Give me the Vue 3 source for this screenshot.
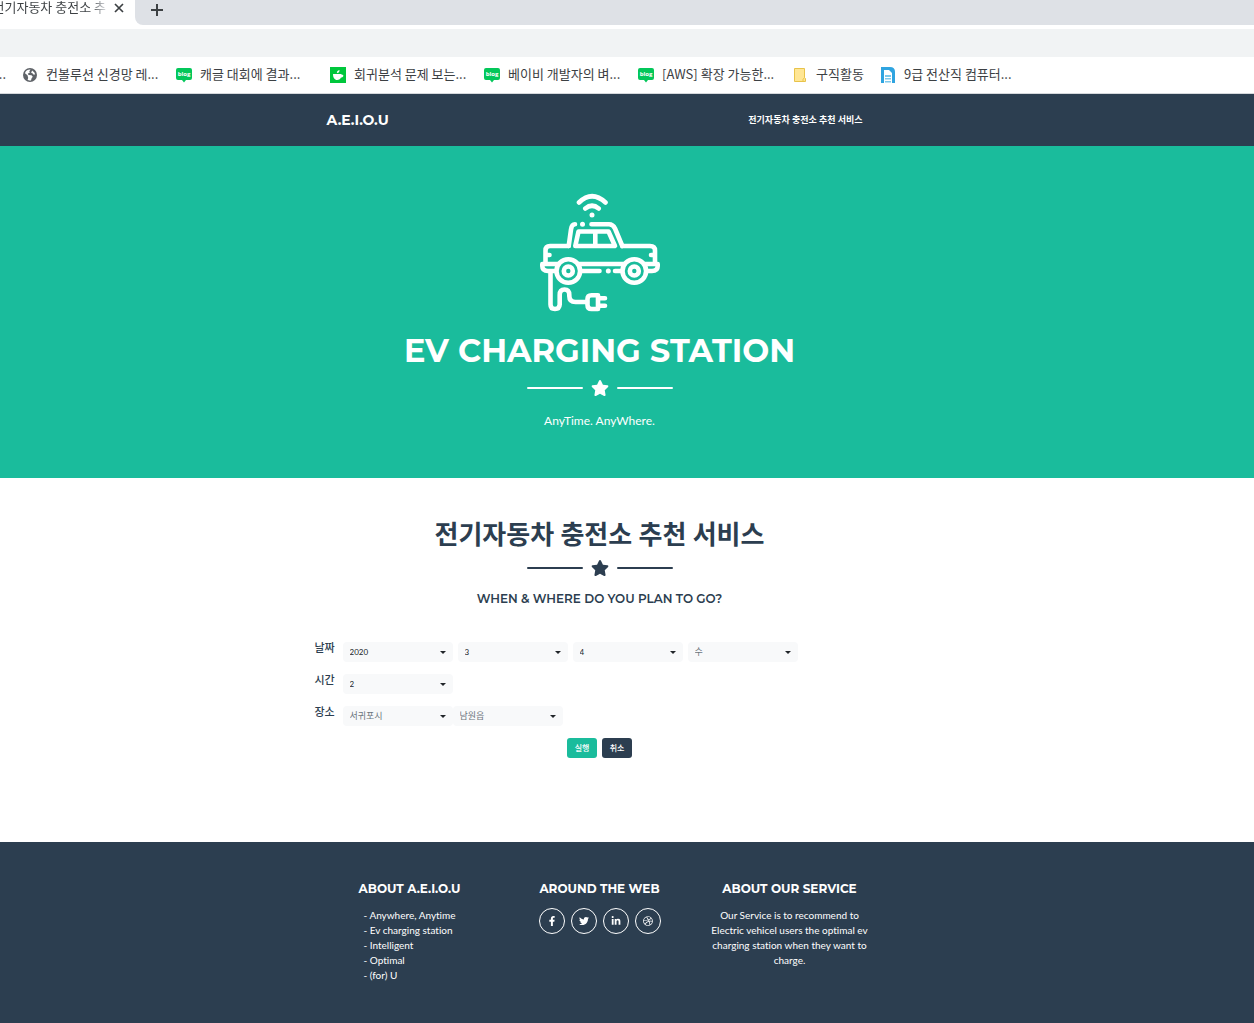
<script setup>
import { reactive } from 'vue'

const bookmarks = [
  { icon: 'globe', title: '컨볼루션 신경망 레...' },
  { icon: 'blog', title: '캐글 대회에 결과...' },
  { icon: 'cup', title: '회귀분석 문제 보는...' },
  { icon: 'blog', title: '베이비 개발자의 벼...' },
  { icon: 'blog', title: '[AWS] 확장 가능한...' },
  { icon: 'folder', title: '구직활동', short: true },
  { icon: 'doc', title: '9급 전산직 컴퓨터...' },
]

const rows = reactive([
  {
    label: '날짜',
    fields: [
      { id: 'year', name: '연도', value: '2020' },
      { id: 'month', name: '월', value: '3' },
      { id: 'day', name: '일', value: '4' },
      { id: 'weekday', name: '요일', value: '수', muted: true },
    ],
  },
  { label: '시간', fields: [{ id: 'hour', name: '시간', value: '2' }] },
  {
    label: '장소',
    joined: true,
    fields: [
      { id: 'city', name: '시', value: '서귀포시', muted: true },
      { id: 'town', name: '읍면동', value: '남원읍', muted: true },
    ],
  },
])

const about = ['- Anywhere, Anytime', '- Ev charging station', '- Intelligent', '- Optimal', '- (for) U']

const socials = [
  {
    name: 'Facebook',
    box: '0 0 320 512',
    d: 'M279.14 288l14.22-92.66h-88.91v-60.13c0-25.35 12.42-50.06 52.24-50.06h40.42V6.26S260.43 0 225.36 0c-73.22 0-121.08 44.38-121.08 124.72v70.62H22.89V288h81.39v224h100.17V288z',
  },
  {
    name: 'Twitter',
    box: '0 0 512 512',
    d: 'M459.37 151.716c.325 4.548.325 9.097.325 13.645 0 138.72-105.583 298.558-298.558 298.558-59.452 0-114.68-17.219-161.137-47.106 8.447.974 16.568 1.299 25.34 1.299 49.055 0 94.213-16.568 130.274-44.832-46.132-.975-84.792-31.188-98.112-72.772 6.498.974 12.995 1.624 19.818 1.624 9.421 0 18.843-1.3 27.614-3.573-48.081-9.747-84.143-51.98-84.143-102.985v-1.299c13.969 7.797 30.214 12.67 47.431 13.319-28.264-18.843-46.781-51.005-46.781-87.391 0-19.492 5.197-37.36 14.294-52.954 51.655 63.675 129.3 105.258 216.365 109.807-1.624-7.797-2.599-15.918-2.599-24.04 0-57.828 46.782-104.934 104.934-104.934 30.213 0 57.502 12.67 76.67 33.137 23.715-4.548 46.456-13.32 66.599-25.34-7.798 24.366-24.366 44.833-46.132 57.827 21.117-2.273 41.584-8.122 60.426-16.243-14.292 20.791-32.161 39.308-52.628 54.253z',
  },
  {
    name: 'LinkedIn',
    box: '0 0 448 512',
    d: 'M100.28 448H7.4V148.9h92.88zM53.79 108.1C24.09 108.1 0 83.5 0 53.8a53.79 53.79 0 0 1 107.58 0c0 29.7-24.1 54.3-53.79 54.3zM447.9 448h-92.68V302.4c0-34.7-.7-79.2-48.29-79.2-48.29 0-55.69 37.7-55.69 76.7V448h-92.78V148.9h89.08v40.8h1.3c12.4-23.5 42.69-48.3 87.88-48.3 94 0 111.28 61.9 111.28 142.3V448z',
  },
  {
    name: 'Dribbble',
    box: '0 0 512 512',
    d: 'M256 8C119.252 8 8 119.252 8 256s111.252 248 248 248 248-111.252 248-248S392.748 8 256 8zm163.97 114.366c29.503 36.046 47.369 81.957 47.835 131.955-6.984-1.477-77.018-15.682-147.502-6.818-5.752-14.041-11.181-26.393-18.617-41.614 78.321-31.977 113.818-77.482 118.284-83.523zM396.421 97.87c-3.81 5.427-35.697 48.286-111.021 76.519-34.712-63.776-73.185-116.168-79.04-124.008 67.176-16.193 137.966 1.27 190.061 47.489zm-230.48-33.25c5.585 7.659 43.438 60.116 78.537 122.509-99.087 26.313-186.36 25.934-195.834 25.809C62.38 147.205 106.678 92.573 165.941 64.62zM44.17 256.323c0-2.166.043-4.322.108-6.473 9.268.19 111.92 1.513 217.706-30.146 6.064 11.868 11.857 23.915 17.174 35.949-76.599 21.575-146.194 83.527-180.531 142.306C64.794 360.405 44.17 310.73 44.17 256.323zm81.807 167.113c22.127-45.233 82.178-103.622 167.579-132.756 29.74 77.283 42.039 142.053 45.189 160.638-68.112 29.013-150.015 21.053-212.768-27.882zm248.38 8.489c-2.171-12.886-13.446-74.897-41.152-151.033 66.38-10.626 124.7 6.768 131.947 9.055-9.442 58.941-43.273 109.844-90.795 141.978z',
  },
]

const star =
  'M259.3 17.8L194 150.2 47.9 171.5c-26.2 3.8-36.7 36.1-17.7 54.6l105.7 103-25 145.5c-4.5 26.3 23.2 46 46.4 33.7L288 439.6l130.7 68.7c23.2 12.2 50.9-7.4 46.4-33.7l-25-145.5 105.7-103c19-18.5 8.5-50.8-17.7-54.6L382 150.2 316.7 17.8c-11.7-23.6-45.6-23.9-57.4 0z'
</script>

<template>
  <div class="window">
    <div class="tabstrip">
      <div class="tab">
        <span class="tab-title">전기자동차 충전소 추</span>
        <button class="tab-close" type="button" aria-label="탭 닫기">
          <svg width="10" height="10" viewBox="0 0 10 10"><path d="M1 1l8 8M9 1L1 9" stroke="#3c4043" stroke-width="1.700" /></svg>
        </button>
      </div>
      <div class="strip-rest">
        <button class="tab-new" type="button" aria-label="새 탭">
          <svg width="12" height="12" viewBox="0 0 12 12"><path d="M6 0v12M0 6h12" stroke="#3c4043" stroke-width="2" /></svg>
        </button>
      </div>
    </div>
    <div class="addressbar"></div>
    <nav class="bookmarks" aria-label="북마크">
      <span class="bookmark-tail">...</span>
      <a v-for="b in bookmarks" :key="b.title" href="#" class="bookmark" :class="{ short: b.short }">
        <svg v-if="b.icon === 'globe'" width="16" height="16" viewBox="0 0 16 16">
          <circle cx="8" cy="8" r="7" fill="#5f6368" />
          <path d="M3 6C4 3.500 6 2.500 8.500 2.600L7.300 4.500l.5 1.300-2 .8.700 1.400 3 .2 1.300 1.500-1.200 1.600-.6 2.300c-1.700.1-2.800-.3-3.700-1.100L6 10.500 3 8z" fill="#fff" />
          <path d="M10.200 3.400l2.200 2 .8 2.200-1.800-.2-1.200-1.300-1.200-.3z" fill="#fff" />
          <path d="M2 5.500l3.500 2.800.7 2.600-.9 2.200L2 10z" fill="#5f6368" />
        </svg>
        <svg v-else-if="b.icon === 'blog'" width="16" height="16" viewBox="0 0 16 16">
          <path d="M2 1h12a2 2 0 0 1 2 2v8a2 2 0 0 1-2 2h-4l-2 2.500L6 13H2a2 2 0 0 1-2-2V3a2 2 0 0 1 2-2z" fill="#03c75a" />
          <text x="8" y="9" text-anchor="middle" class="blog-word">blog</text>
        </svg>
        <svg v-else-if="b.icon === 'cup'" width="16" height="16" viewBox="0 0 16 16">
          <path d="M0 0h16v16H0z" fill="#00c73c" />
          <path d="M3 7h8.500v.8c2.600-.6 2.600 2.600-.5 2.700C10 12.300 8.800 13 7.200 13 4.500 13 3 10.500 3 7z" fill="#fff" />
          <path d="M7 6c-.6-1.500.7-2.500 2.500-3C9.500 4.800 8.700 6 7 6z" fill="#fff" />
        </svg>
        <svg v-else-if="b.icon === 'folder'" width="16" height="16" viewBox="0 0 16 16">
          <path d="M2.500 1.500h10v9l1 1v3h-11z" fill="#ffe694" stroke="#e8c34a" />
          <path d="M11 14.500v-2l1.500-2" fill="none" stroke="#e8c34a" />
        </svg>
        <svg v-else width="16" height="16" viewBox="0 0 16 16">
          <path d="M1 0h9q5 0 5 5v11H1z" fill="#2fa4e0" />
          <path d="M4 3h5l3 3v10H4z" fill="#fff" />
          <path d="M5 8h6v2H5zM5 11h6v1.500H5zM5 14h6v1.500H5z" fill="#7cc8ea" />
        </svg>
        <span>{{ b.title }}</span>
      </a>
    </nav>

    <header class="topbar">
      <div class="container topbar-inner">
        <a href="#" class="brand">A.E.I.O.U</a>
        <a href="#service" class="nav-link">전기자동차 충전소 추천 서비스</a>
      </div>
    </header>

    <section class="hero">
      <svg class="car" width="120" height="120" viewBox="0 0 120 120" fill="none" stroke="#fff" stroke-width="4.600" stroke-linecap="round" stroke-linejoin="round">
        <path d="M39 9.500Q52 -3 65.500 9.500M45.300 15.500Q52 10 58.700 15.500" />
        <path d="M28.700 53L31 36.500Q31.700 31.300 35 31.300M51.500 31.300H69Q73 31.300 75 35.500L82.300 53" />
        <path d="M38.500 38.500H68.500L75 53H35.300zM55.300 38.500V53" />
        <path d="M5.500 69V57.500Q5.500 53 10 53H28.700M82.300 53H110Q115 53 115 57.500V69M7 62H9.500M113.500 62H111" />
        <path d="M15 78H8Q2.300 78 2.300 73V71H18M39 71H84M105 71H117.700V73Q117.700 78 112 78H108M42 78H59.500M75 78H81" />
        <circle cx="28.300" cy="78" r="11.800" /><circle cx="28.300" cy="78" r="4.500" />
        <circle cx="94.300" cy="78" r="11.800" /><circle cx="94.300" cy="78" r="4.500" />
        <path d="M10.500 79V111.500Q10.500 116 15 116T19.700 111.500V102Q19.700 96.500 24.500 96.500T29.300 102V103Q29.300 109 35.500 109H47" />
        <path d="M58 102.300H51.500Q47.500 102.300 47.500 106V112Q47.500 116 51.500 116H58zM58 105.300H65M58 112.700H65" />
        <g fill="#fff" stroke="none">
          <circle cx="52" cy="22" r="2.500" /><circle cx="42.500" cy="31.300" r="2.500" /><circle cx="68.300" cy="78" r="2.500" />
        </g>
      </svg>
      <h1>EV CHARGING STATION</h1>
      <div class="divider">
        <i></i>
        <svg width="18" height="16" viewBox="0 0 576 512"><path :d="star" fill="currentColor" /></svg>
        <i></i>
      </div>
      <p>AnyTime. AnyWhere.</p>
    </section>

    <main id="service" class="service">
      <h2>전기자동차 충전소 추천 서비스</h2>
      <div class="divider">
        <i></i>
        <svg width="18" height="16" viewBox="0 0 576 512"><path :d="star" fill="currentColor" /></svg>
        <i></i>
      </div>
      <h3>WHEN &amp; WHERE DO YOU PLAN TO GO?</h3>
      <form class="container" @submit.prevent>
        <div v-for="row in rows" :key="row.label" class="row">
          <label :for="row.fields[0].id">{{ row.label }}</label>
          <div class="fields" :class="{ joined: row.joined }">
            <div v-for="f in row.fields" :key="f.id" class="select">
              <select :id="f.id" v-model="f.value" :aria-label="f.name" :class="{ muted: f.muted }">
                <option>{{ f.value }}</option>
              </select>
            </div>
          </div>
        </div>
        <div class="actions">
          <button type="submit" class="run">실행</button>
          <button type="reset" class="cancel">취소</button>
        </div>
      </form>
    </main>

    <footer class="footer">
      <div class="container columns">
        <div class="column">
          <h4>ABOUT A.E.I.O.U</h4>
          <ul>
            <li v-for="line in about" :key="line">{{ line }}</li>
          </ul>
        </div>
        <div class="column">
          <h4>AROUND THE WEB</h4>
          <div class="socials">
            <a v-for="s in socials" :key="s.name" href="#" :aria-label="s.name">
              <svg height="10" width="12" :viewBox="s.box"><path :d="s.d" fill="currentColor" /></svg>
            </a>
          </div>
        </div>
        <div class="column">
          <h4>ABOUT OUR SERVICE</h4>
          <p>Our Service is to recommend to Electric vehicel users the optimal ev charging station when they want to charge.</p>
        </div>
      </div>
    </footer>
  </div>
</template>

<style>
body {
  margin: 0;
  background: #fff;
}
</style>

<style scoped>
.window {
  --side: 55px;
  --navy: #2c3e50;
  --green: #1abc9c;
  overflow: hidden;
  font-family: Lato, "Noto Sans CJK KR", sans-serif;
  font-variant-ligatures: none;
  color: var(--navy);
}
h1, h2, h3, h4, p, ul {
  margin: 0;
  padding: 0;
}
h1, h3, h4, .brand {
  font-family: Montserrat, Inter, sans-serif;
  font-weight: 700;
}
a {
  color: inherit;
  text-decoration: none;
}
button {
  border: 0;
  padding: 0;
  background: none;
  font-family: inherit;
}
svg {
  display: block;
  flex: none;
}

.tabstrip {
  display: flex;
  height: 25px;
  background: #fff;
}
.tab {
  display: flex;
  align-items: flex-start;
  justify-content: flex-end;
  gap: 8px;
  width: 124px;
  padding-right: 11px;
}
.tab-title {
  font: 13px/14px "Noto Sans CJK KR", sans-serif;
  white-space: nowrap;
  background: linear-gradient(90deg, #3c4043 86%, #dadce0);
  background-clip: text;
  color: transparent;
}
.tab-close {
  padding-top: 3px;
}
.strip-rest {
  flex: 1;
  background: #dee1e6;
  border-bottom-left-radius: 8px;
}
.tab-new {
  padding: 2px 16px;
}
.addressbar {
  height: 28px;
  margin-top: 4px;
  background: #f1f3f4;
}
.bookmarks {
  display: flex;
  align-items: center;
  gap: 16px;
  height: 36px;
  border-bottom: 1px solid #d5d8dc;
  font: 13px/18px "Noto Sans CJK KR", sans-serif;
  color: #3c4043;
  white-space: nowrap;
}
.bookmark span,
.bookmark-tail {
  padding-bottom: 2px;
}
.bookmark-tail {
  display: flex;
  justify-content: flex-end;
  width: 6px;
}
.bookmark {
  display: flex;
  align-items: center;
  flex: none;
  gap: 8px;
  width: 138px;
}
.bookmark.short {
  width: 72px;
}
.blog-word {
  font: 700 6px "Open Sans", sans-serif;
  fill: #fff;
}

.container {
  max-width: 570px;
  margin: 0 auto;
}
.topbar {
  padding: 16px var(--side) 16px 0;
  background: var(--navy);
  color: #fff;
}
.topbar-inner {
  display: flex;
  align-items: center;
  justify-content: space-between;
}
.brand {
  padding-left: 12px;
  font-size: 14px;
  line-height: 20px;
}
.nav-link {
  padding-right: 22px;
  font-size: 9px;
  font-weight: 700;
  line-height: 20px;
}

.hero {
  padding: 47px var(--side) 47px 0;
  background: var(--green);
  color: #fff;
  text-align: center;
}
.car {
  margin: 0 auto;
}
.hero h1 {
  margin-top: 18px;
  font-size: 32px;
  line-height: 40px;
}
.hero p {
  margin-top: 15px;
  font-size: 12px;
  line-height: 20px;
}
.divider {
  display: flex;
  align-items: center;
  justify-content: center;
  gap: 8px;
  margin-top: 9px;
}
.divider i {
  width: 56px;
  height: 2px;
  border-radius: 1px;
  background: currentColor;
}

.service {
  padding: 36px var(--side) 84px 0;
  text-align: center;
}
.service h2 {
  font-size: 26px;
  font-weight: 700;
  line-height: 40px;
}
.service .divider {
  margin-top: 6px;
}
.service h3 {
  margin-top: 13px;
  font-size: 12px;
  font-weight: 600;
  line-height: 20px;
}
form {
  display: flex;
  flex-direction: column;
  gap: 12px;
  padding-top: 33px;
}
.row {
  display: flex;
  align-items: flex-start;
}
.row label {
  width: 28px;
  font-size: 11px;
  font-weight: 500;
  line-height: 12px;
  text-align: left;
}
.fields {
  display: flex;
  gap: 5px;
}
.fields.joined {
  gap: 0;
}
.select {
  display: grid;
  align-items: center;
  width: 110px;
}
.select::after {
  content: "";
  grid-area: 1 / 1;
  justify-self: end;
  margin-right: 7px;
  border: 3px solid transparent;
  border-top-color: #212529;
  border-bottom-width: 0;
  pointer-events: none;
}
select {
  grid-area: 1 / 1;
  appearance: none;
  width: 100%;
  height: 20px;
  padding: 0 7px;
  border: 0;
  border-radius: 4px;
  background: #f8f9fa;
  color: #212529;
  font: 8px/20px Lato, "Noto Sans CJK KR", sans-serif;
}
select.muted {
  color: #6c757d;
  font-size: 9px;
}
.actions {
  display: flex;
  justify-content: center;
  gap: 5px;
}
.actions button {
  width: 30px;
  height: 20px;
  border-radius: 3px;
  color: #fff;
  font-size: 8px;
  font-weight: 500;
  line-height: 18px;
}
.run {
  background: var(--green);
}
.cancel {
  background: var(--navy);
}

.footer {
  padding: 37px var(--side) 40px 0;
  background: var(--navy);
  color: #fff;
  font-size: 10px;
  line-height: 15px;
}
.columns {
  display: flex;
}
.column {
  display: flex;
  flex: 1;
  flex-direction: column;
  align-items: center;
  gap: 9px;
}
.column h4 {
  font-size: 12px;
  line-height: 20px;
}
.column ul {
  list-style: none;
}
.column p {
  max-width: 160px;
  text-align: center;
}
.socials {
  display: flex;
  gap: 6px;
}
.socials a {
  display: flex;
  align-items: center;
  justify-content: center;
  box-sizing: border-box;
  width: 26px;
  height: 26px;
  border: 1px solid #fff;
  border-radius: 50%;
}
</style>
